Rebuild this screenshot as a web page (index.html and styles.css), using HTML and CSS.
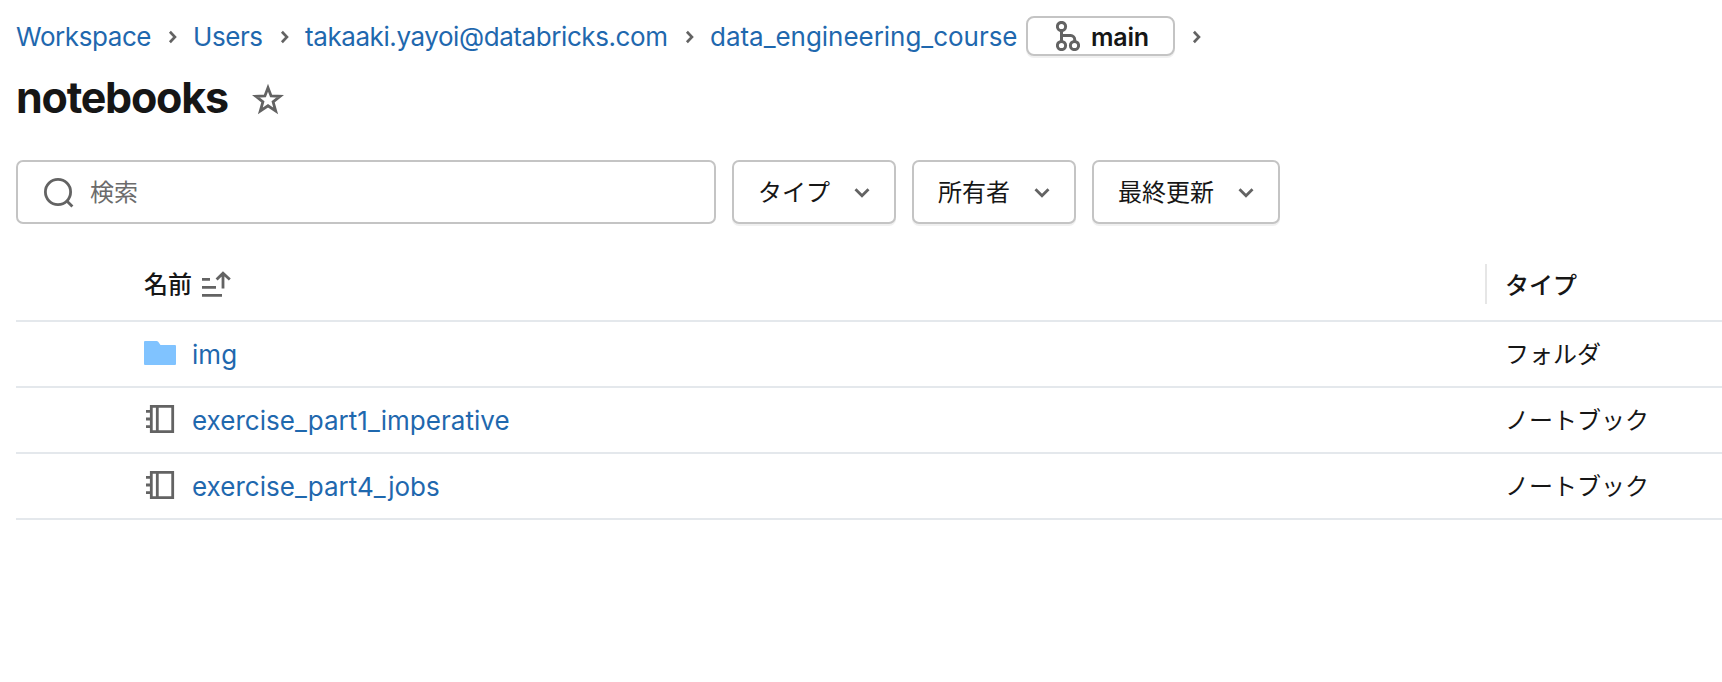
FILE: index.html
```html
<!DOCTYPE html>
<html lang="ja">
<head>
<meta charset="utf-8">
<title>notebooks</title>
<link rel="stylesheet" href="styles.css">
</head>
<body>
<svg class="defs" aria-hidden="true">
  <symbol id="chev" viewBox="0 0 42 40"><path d="M18.8 14.5l5.3 5.5-5.3 5.5"/></symbol>
  <symbol id="down" viewBox="0 0 16 12"><path d="M1.5 2.2l6.5 6.6 6.5-6.6"/></symbol>
  <symbol id="notebook" viewBox="0 0 32 32"><path d="M7.3 3.3h21.4v25.4H7.3zM13.3 3v26M2 8.3h5M2 16h5M2 23.7h5"/></symbol>
</svg>
<nav class="crumbs">
  <a class="c1">Workspace</a><svg class="chev"><use href="#chev"/></svg>
  <a class="c2">Users</a><svg class="chev"><use href="#chev"/></svg>
  <a class="c3">takaaki.yayoi@databricks.com</a><svg class="chev"><use href="#chev"/></svg>
  <a class="c4">data_engineering_course</a>
  <button class="branch">
    <svg class="git" viewBox="0 0 24 30"><circle cx="5.500" cy="5.500" r="4.100"/><circle cx="5.500" cy="24.500" r="4.100"/><circle cx="18.500" cy="24.500" r="4.100"/><path d="M5.500 9.500v11M5.500 14.600h9.200a4 4 0 0 1 4 4v2"/></svg>
    <span>main</span>
  </button>
  <svg class="chev"><use href="#chev"/></svg>
</nav>
<header class="title">
  <h1>notebooks</h1>
  <svg class="star" viewBox="0 0 32 32"><path d="M16 4.800l3.100 8.200 9 .3-7 5.500 2.600 9.200L16 22.800 8.300 28l2.600-9.200-7-5.500 9-.3z"/></svg>
</header>
<div class="filters">
  <div class="search">
    <svg class="lens" viewBox="0 0 32 32"><circle cx="15" cy="15" r="12.600"/><path d="M23.900 23.900l5.500 5.500"/></svg>
    <span>検索</span>
  </div>
  <button class="filter f3"><span>タイプ</span><svg class="down"><use href="#down"/></svg></button>
  <button class="filter f3"><span>所有者</span><svg class="down"><use href="#down"/></svg></button>
  <button class="filter f4"><span>最終更新</span><svg class="down"><use href="#down"/></svg></button>
</div>
<main class="table">
  <div class="row head">
    <div class="name"><span>名前</span><svg class="sort" viewBox="0 0 30 28"><path d="M0 9.400h8M0 17.400h14M0 25.400h20M21 18.500V4M14.600 9.600L21 3.200l6.800 6.400"/></svg></div>
    <div class="type"><span>タイプ</span></div>
  </div>
  <div class="row">
    <div class="name"><svg class="icon folder" viewBox="0 0 32 32"><path d="M1 4h11.500q1 0 1.700.8L16.500 8H31q1 0 1 1v18q0 1-1 1H1q-1 0-1-1V5q0-1 1-1z"/></svg><a>img</a></div>
    <div class="type"><span>フォルダ</span></div>
  </div>
  <div class="row">
    <div class="name"><svg class="icon"><use href="#notebook"/></svg><a>exercise_part1_imperative</a></div>
    <div class="type"><span>ノートブック</span></div>
  </div>
  <div class="row">
    <div class="name"><svg class="icon"><use href="#notebook"/></svg><a>exercise_part4_jobs</a></div>
    <div class="type"><span>ノートブック</span></div>
  </div>
</main>
</body>
</html>
```
FILE: styles.css
```css
* { box-sizing: border-box; }
body {
  margin: 0;
  padding: 16px 0 0 16px;
  background: #fff;
  color: #161616;
  font: 24px/40px Inter, "Noto Sans CJK JP", sans-serif;
  overflow: hidden;
}
svg { fill: none; stroke: #636363; stroke-width: 2.8; flex: none; display: block; }
.defs { position: absolute; width: 0; height: 0; }
a { color: #1f68ae; white-space: nowrap; font-size: 26px; }
button { font: inherit; color: inherit; background: #fff; border: 2px solid #c4c4c4; box-shadow: 0 2px 0 #f0f0f0; padding: 0; display: flex; align-items: center; }

.crumbs { display: flex; height: 40px; align-items: center; }
.crumbs a { padding-top: 2px; letter-spacing: -0.42px; }
.c1 { width: 135px; }
.c2 { width: 70px; }
.c3 { width: 363px; }
.crumbs .c4 { width: 308px; letter-spacing: -0.03px; }
.chev { width: 42px; height: 40px; padding-top: 2px; }
.branch { width: 149px; height: 40px; margin-left: 8px; border-radius: 8px; padding-left: 28px; gap: 11px; font-size: 25px; font-weight: 600; line-height: 36px; letter-spacing: -0.2px; }
.branch span { padding-top: 1px; }
.git { width: 24px; height: 30px; stroke-width: 3; margin-top: -1px; }

.title { display: flex; align-items: center; height: 64px; margin-top: 10px; }
.title h1 { margin: -3px 0 0; width: 236px; font-size: 43px; font-weight: 700; line-height: 64px; letter-spacing: -1.25px; }
.star { width: 32px; height: 32px; margin-top: 2px; }

.filters { display: flex; gap: 16px; margin-top: 30px; height: 64px; }
.search { width: 700px; border: 2px solid #c4c4c4; border-radius: 7px; display: flex; align-items: center; padding-left: 25px; gap: 15px; color: #6b6b6b; }
.search span, .filter span, .head .type span, .head .name span { padding-top: 2px; }
.lens { width: 32px; height: 32px; margin-top: 2px; }
.filter { border-radius: 7px; padding: 0 24px; justify-content: space-between; }
.f3 { width: 164px; }
.f4 { width: 188px; }
.down { width: 16px; height: 12px; margin-top: 2px; }

.table { margin-top: 24px; }
.row { display: flex; height: 66px; align-items: center; border-bottom: 2px solid #e4e8ec; }
.head { height: 74px; font-weight: 500; }
.name { flex: 1; display: flex; align-items: center; padding-left: 128px; }
.name a { padding-top: 2px; letter-spacing: 0.03px; }
.icon { width: 32px; height: 32px; margin: -2px 16px 0 0; }
.folder { fill: #80c3ff; stroke: none; }
.sort { width: 30px; height: 28px; margin-left: 10px; }
.type { display: flex; height: 40px; width: 237px; padding: 1px 0 0 20px; }
.head .type { border-left: 2px solid #e6e6e6; padding: 0 0 0 18px; }
```
